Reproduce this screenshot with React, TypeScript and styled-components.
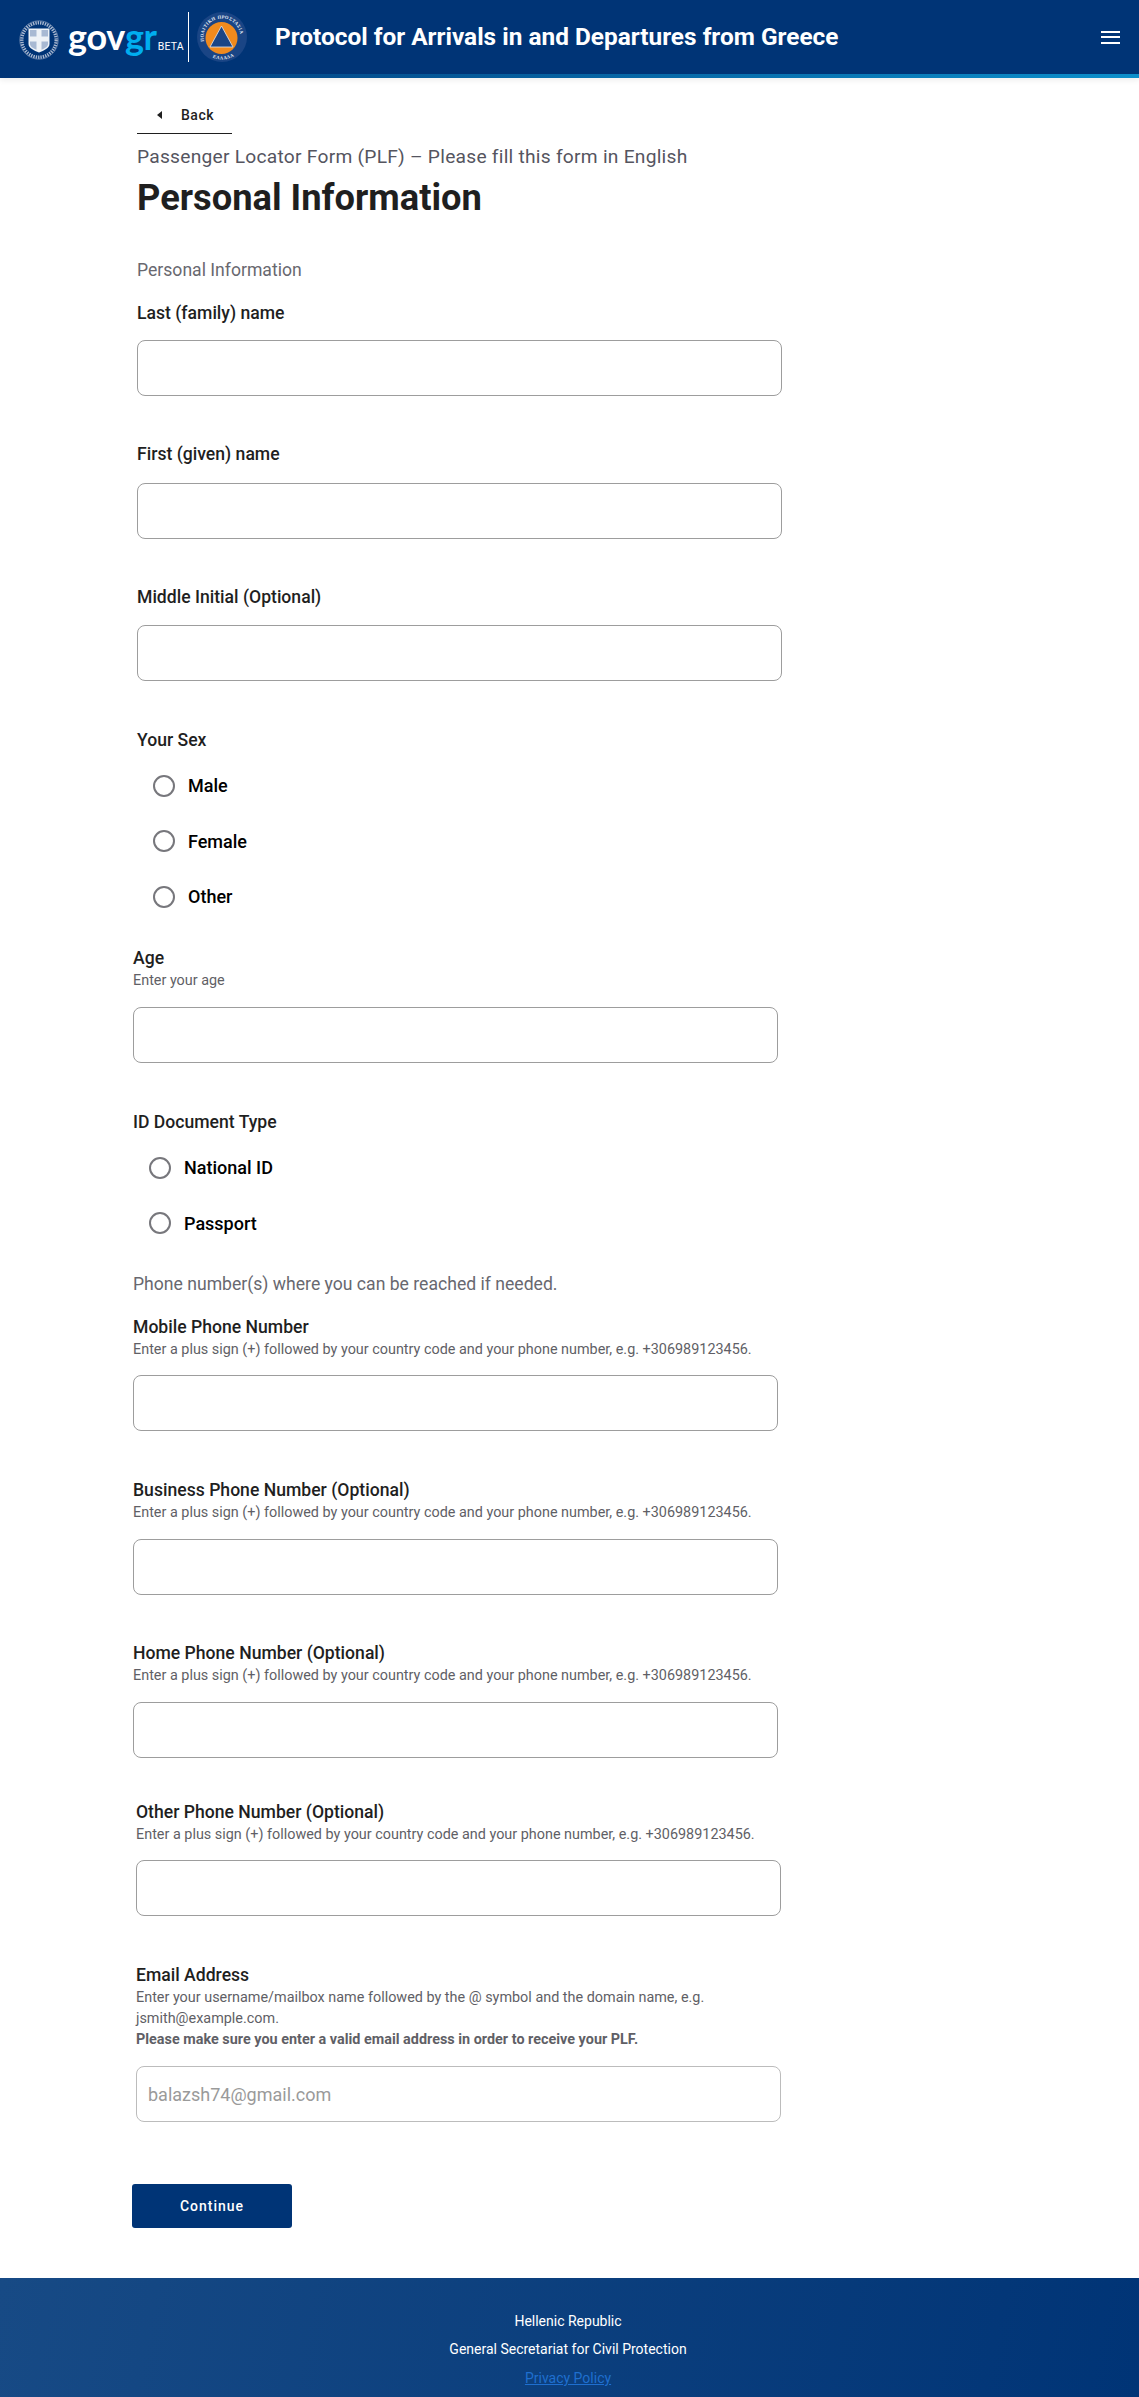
import React from "react";
import styled, { createGlobalStyle } from "styled-components";

const Global = createGlobalStyle`
  html, body { margin: 0; padding: 0; background: #fff; }
  body { font-family: Roboto, "Liberation Sans", sans-serif; color: #1f1f1f; }
  * { box-sizing: border-box; }
`;

const Page = styled.div`
  width: 1139px;
  min-height: 2397px;
  display: flex;
  flex-direction: column;
`;

const Header = styled.header`
  height: 78px;
  background: #003476;
  position: relative;
  display: flex;
  align-items: center;
  padding: 0 19px 4px 19px;
  box-shadow: 0 2px 6px rgba(0, 0, 0, 0.08);
  &::after {
    content: "";
    position: absolute;
    left: 0;
    right: 0;
    bottom: 0;
    height: 4px;
    background: linear-gradient(90deg, #003476 0%, #0c8fcb 100%);
  }
`;

const EmblemWrap = styled.div`
  display: flex;
  margin-top: 6px;
`;

const Wordmark = styled.div`
  display: flex;
  align-items: baseline;
  margin: 8px 0 0 9px;
  width: 120px;
  font-family: Lato, Roboto, sans-serif;
  font-weight: 700;
  font-size: 36px;
  line-height: 44px;
  letter-spacing: -0.3px;
  color: #fff;
`;

const WordmarkAccent = styled.span`
  color: #00aeef;
`;

const Beta = styled.span`
  font-family: Roboto, sans-serif;
  font-size: 10.5px;
  font-weight: 400;
  letter-spacing: 0.2px;
  margin-left: 1px;
`;

const Divider = styled.div`
  width: 1px;
  height: 50px;
  background: #fff;
`;

const SealWrap = styled.div`
  margin-left: 8px;
  display: flex;
`;

const Title = styled.div`
  margin-left: 28px;
  flex: 1;
  font-size: 24.4px;
  font-weight: 700;
  line-height: 32px;
  color: #fff;
`;

const Menu = styled.button`
  width: 19px;
  height: 13px;
  padding: 0;
  border: 0;
  background: none;
  display: flex;
  flex-direction: column;
  justify-content: space-between;
`;

const MenuLine = styled.span`
  display: block;
  height: 2px;
  background: #fff;
`;

const Main = styled.main`
  flex: 1;
  padding: 0 0 0 137px;
  width: 782px;
`;

const BackLink = styled.a`
  display: flex;
  align-items: center;
  width: 95px;
  height: 38px;
  padding-left: 20px;
  margin-top: 18px;
  border-bottom: 1px solid #1f1f1f;
  font-size: 14px;
  font-weight: 500;
  letter-spacing: 0.5px;
  color: #1f1f1f;
`;

const BackArrow = styled.span`
  width: 0;
  height: 0;
  border-top: 4px solid transparent;
  border-bottom: 4px solid transparent;
  border-right: 5px solid #1f1f1f;
  margin-right: 19px;
`;

const Caption = styled.div`
  margin-top: 11px;
  font-size: 19.2px;
  line-height: 24px;
  letter-spacing: 0.25px;
  color: #55555f;
`;

const Heading = styled.h1`
  margin: 7px 0 0;
  font-size: 36.3px;
  line-height: 44px;
  font-weight: 700;
  color: #1f1f1f;
`;

const Section = styled.div`
  margin-top: 38px;
  font-size: 17.6px;
  line-height: 24px;
  color: #68686f;
`;

const Field = styled.div<{ $shift?: number; $top: number }>`
  margin-top: ${(p) => p.$top}px;
  margin-left: ${(p) => p.$shift ?? 0}px;
`;

const Label = styled.label`
  display: block;
  font-size: 17.6px;
  line-height: 24px;
  font-weight: 500;
  color: #1f1f1f;
`;

const Hint = styled.div`
  font-size: 14.4px;
  line-height: 21px;
  color: #5f5f66;
`;

const HintStrong = styled.strong`
  display: block;
  font-weight: 700;
`;

const TextInput = styled.input<{ $gap: number }>`
  display: block;
  width: 645px;
  height: 56px;
  margin-top: ${(p) => p.$gap}px;
  padding: 0 11px;
  border: 1px solid #9d9d9d;
  border-radius: 8px;
  background: #fff;
  font-family: Roboto, sans-serif;
  font-size: 18px;
  &::placeholder { color: #9a9a9a; opacity: 1; }
  &:disabled { border-color: #bcbcbc; }
`;

const RadioList = styled.div`
  display: flex;
  flex-direction: column;
  margin: 6px 0 0 16px;
`;

const RadioRow = styled.label`
  display: flex;
  align-items: center;
  gap: 13px;
  height: 55.5px;
  font-size: 18px;
  font-weight: 500;
  color: #000;
`;

const RadioDot = styled.span`
  width: 22px;
  height: 22px;
  border: 2px solid #77777c;
  border-radius: 50%;
  background: #fff;
  flex: none;
`;

const Note = styled.div`
  margin-top: 21px;
  margin-left: -4px;
  font-size: 17.6px;
  line-height: 24px;
  color: #68686f;
`;

const ContinueButton = styled.button`
  display: block;
  width: 160px;
  height: 44px;
  margin: 62px 0 50px -5px;
  border: 0;
  border-radius: 3px;
  background: #003476;
  color: #fff;
  font-family: Roboto, sans-serif;
  font-size: 14px;
  font-weight: 500;
  letter-spacing: 1px;
`;

const Footer = styled.footer`
  height: 119px;
  padding: 29px 3px 0 0;
  background: linear-gradient(100deg, #174a85 0%, #003476 100%);
  display: flex;
  flex-direction: column;
  align-items: center;
  font-size: 14px;
  color: #fff;
`;

const FooterLine = styled.div`
  height: 28px;
  line-height: 28px;
`;

const PrivacyLink = styled.a`
  line-height: 30px;
  color: #1f6fcf;
  text-decoration: underline;
`;

const Emblem = () => (
  <svg width="40" height="40" viewBox="0 0 40 40" aria-hidden="true">
    <circle cx="20" cy="20" r="17.2" fill="none" stroke="#a9b8d0" strokeWidth="3.4" strokeDasharray="1.4 1" />
    <circle cx="20" cy="20" r="19.2" fill="none" stroke="#7f95b8" strokeWidth="0.7" />
    <path d="M9.5 8.5h21v15.5c0 4-5.5 6.5-10.500 8.500-5-2-10.500-4.500-10.500-8.500z" fill="#eef2f7" />
    <path d="M11 10h6.500v6.500H11zM22.500 10H29v6.500h-6.500zM11 21.500h6.500v8.200c-3-1.200-6.500-3-6.500-5.700zM22.500 21.500H29V24c0 2.700-3.500 4.500-6.500 5.700z" fill="#a8b9d3" />
  </svg>
);

const CivilSeal = () => (
  <svg width="50" height="50" viewBox="0 0 50 50" aria-hidden="true">
    <circle cx="25" cy="25" r="25" fill="#1a4585" />
    <defs>
      <path id="sealTop" d="M7.600 31.300A18.500 18.500 0 1 1 42.400 31.300" />
      <path id="sealBottom" d="M10.500 42.200A22.500 22.500 0 0 0 39.500 42.200" />
    </defs>
    <circle cx="24.500" cy="26" r="16" fill="#f08a1d" />
    <path d="M24.500 14 36 35H13z" fill="#1a4585" stroke="#dfe6f0" strokeWidth="0.8" strokeLinejoin="round" />
    <text fontFamily="Liberation Serif, serif" fontSize="4.700" fontWeight="700" fill="#e8edf5" letterSpacing="0.35">
      <textPath href="#sealTop" startOffset="2">ΠΟΛΙΤΙΚΗ ΠΡΟΣΤΑΣΙΑ</textPath>
    </text>
    <text fontFamily="Liberation Serif, serif" fontSize="4.700" fontWeight="700" fill="#e8edf5" letterSpacing="0.5">
      <textPath href="#sealBottom" startOffset="6">ΕΛΛΑΔΑ</textPath>
    </text>
  </svg>
);

const phoneHint = "Enter a plus sign (+) followed by your country code and your phone number, e.g. +306989123456.";

export default function App() {
  return (
    <Page>
      <Global />
      <Header>
        <EmblemWrap>
          <Emblem />
        </EmblemWrap>
        <Wordmark>
          gov<WordmarkAccent>gr</WordmarkAccent>
          <Beta>BETA</Beta>
        </Wordmark>
        <Divider />
        <SealWrap>
          <CivilSeal />
        </SealWrap>
        <Title>Protocol for Arrivals in and Departures from Greece</Title>
        <Menu aria-label="Menu">
          <MenuLine />
          <MenuLine />
          <MenuLine />
        </Menu>
      </Header>
      <Main>
        <BackLink>
          <BackArrow />
          Back
        </BackLink>
        <Caption>Passenger Locator Form (PLF) – Please fill this form in English</Caption>
        <Heading>Personal Information</Heading>
        <Section>Personal Information</Section>

        <Field $top={19}>
          <Label>Last (family) name</Label>
          <TextInput $gap={15} />
        </Field>
        <Field $top={46}>
          <Label>First (given) name</Label>
          <TextInput $gap={17} />
        </Field>
        <Field $top={46}>
          <Label>Middle Initial (Optional)</Label>
          <TextInput $gap={16} />
        </Field>
        <Field $top={47}>
          <Label>Your Sex</Label>
          <RadioList>
            <RadioRow><RadioDot />Male</RadioRow>
            <RadioRow><RadioDot />Female</RadioRow>
            <RadioRow><RadioDot />Other</RadioRow>
          </RadioList>
        </Field>
        <Field $top={21.5} $shift={-4}>
          <Label>Age</Label>
          <Hint>Enter your age</Hint>
          <TextInput $gap={16} />
        </Field>
        <Field $top={47} $shift={-4}>
          <Label>ID Document Type</Label>
          <RadioList>
            <RadioRow><RadioDot />National ID</RadioRow>
            <RadioRow><RadioDot />Passport</RadioRow>
          </RadioList>
        </Field>
        <Note>Phone number(s) where you can be reached if needed.</Note>
        <Field $top={19} $shift={-4}>
          <Label>Mobile Phone Number</Label>
          <Hint>{phoneHint}</Hint>
          <TextInput $gap={15} />
        </Field>
        <Field $top={47} $shift={-4}>
          <Label>Business Phone Number (Optional)</Label>
          <Hint>{phoneHint}</Hint>
          <TextInput $gap={16} />
        </Field>
        <Field $top={46} $shift={-4}>
          <Label>Home Phone Number (Optional)</Label>
          <Hint>{phoneHint}</Hint>
          <TextInput $gap={16} />
        </Field>
        <Field $top={42} $shift={-1}>
          <Label>Other Phone Number (Optional)</Label>
          <Hint>{phoneHint}</Hint>
          <TextInput $gap={15} />
        </Field>
        <Field $top={47} $shift={-1}>
          <Label>Email Address</Label>
          <Hint>
            Enter your username/mailbox name followed by the @ symbol and the domain name, e.g. jsmith@example.com.
            <HintStrong>Please make sure you enter a valid email address in order to receive your PLF.</HintStrong>
          </Hint>
          <TextInput $gap={16} disabled placeholder="balazsh74@gmail.com" />
        </Field>
        <ContinueButton>Continue</ContinueButton>
      </Main>
      <Footer>
        <FooterLine>Hellenic Republic</FooterLine>
        <FooterLine>General Secretariat for Civil Protection</FooterLine>
        <PrivacyLink>Privacy Policy</PrivacyLink>
      </Footer>
    </Page>
  );
}
